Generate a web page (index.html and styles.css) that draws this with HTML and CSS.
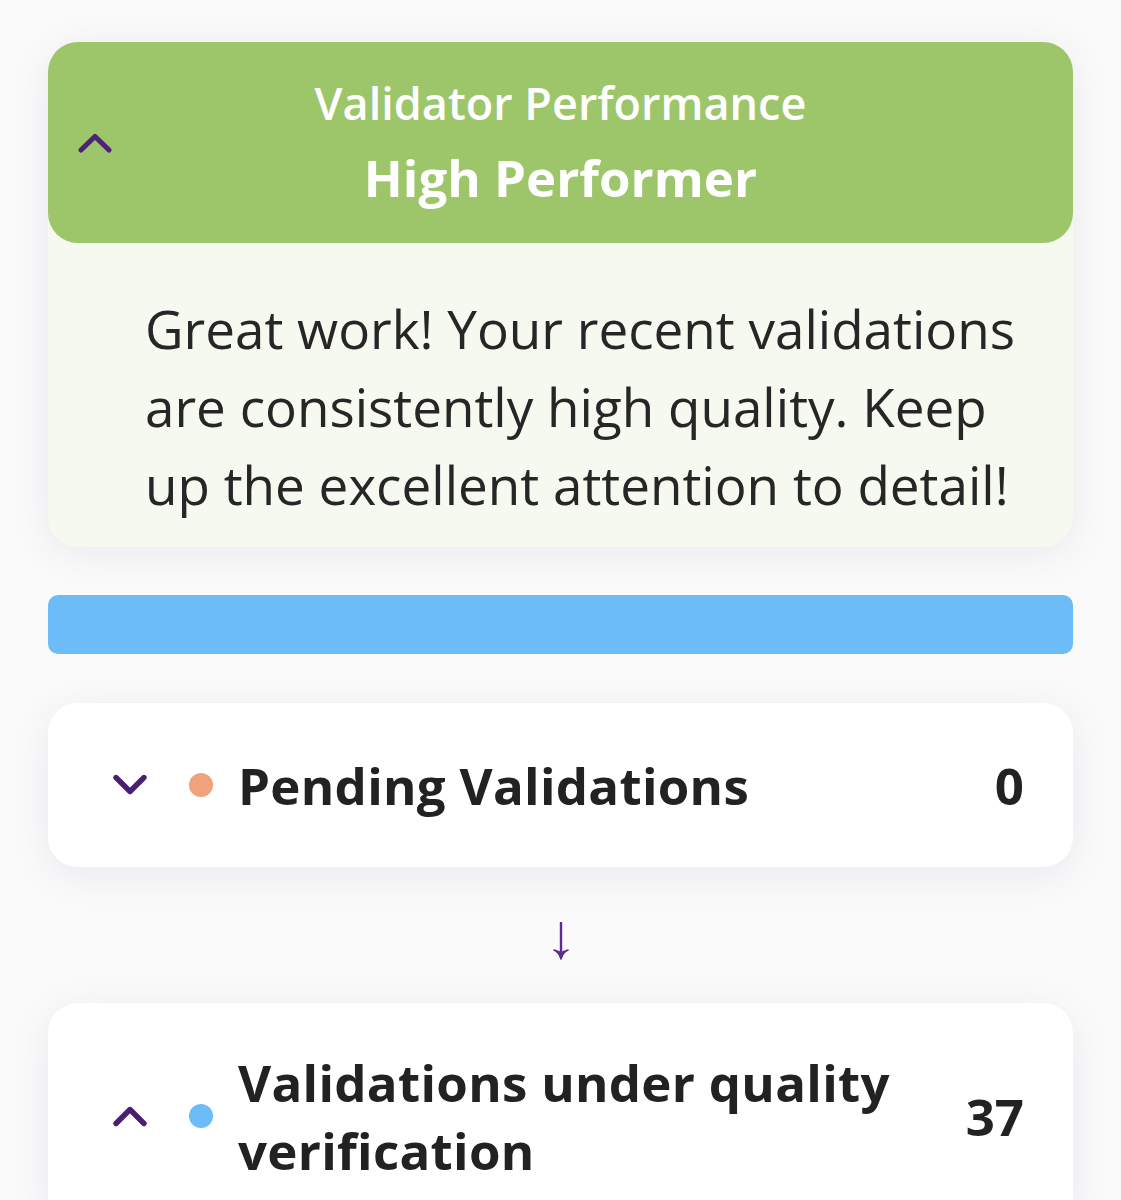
FILE: index.html
```html
<!DOCTYPE html>
<html lang="en">
<head>
<meta charset="utf-8">
<title>Validator</title>
<link rel="stylesheet" href="styles.css">
</head>
<body>
<main class="page">
  <section class="perf-card">
    <div class="perf-header">
      <div class="perf-toggle">
        <svg class="chev" viewBox="0 0 36 22" width="36" height="22"><path d="M4 18 L18 4.5 L32 18" fill="none" stroke="#4d2376" stroke-width="5.2" stroke-linecap="round" stroke-linejoin="round"/></svg>
      </div>
      <div class="perf-titles">
        <div class="perf-label">Validator Performance</div>
        <div class="perf-level">High Performer</div>
      </div>
      <div></div>
    </div>
    <p class="perf-body">Great work! Your recent validations are consistently high quality. Keep up the excellent attention to detail!</p>
  </section>

  <div class="blue-bar"></div>

  <section class="stat-card">
    <svg class="chev small" viewBox="0 0 36 24" width="36" height="24"><path d="M4 4.5 L18 18.5 L32 4.5" fill="none" stroke="#4a1f73" stroke-width="5.4" stroke-linecap="round" stroke-linejoin="round"/></svg>
    <span class="dot dot-orange"></span>
    <span class="stat-name">Pending Validations</span>
    <span class="stat-count">0</span>
  </section>

  <div class="flow-arrow" aria-label="then">
    <svg viewBox="0 0 20 40" width="20" height="40"><path d="M10 1 V34" stroke="#5b2d8e" stroke-width="2.4" fill="none"/><path d="M3 29 Q8 31 10 38 Q12 31 17 29 Q12 31 10 31.5 Q8 31 3 29 Z" fill="#5b2d8e" stroke="#5b2d8e" stroke-width="1.6" stroke-linejoin="round"/></svg>
  </div>

  <section class="stat-card tall">
    <svg class="chev small" viewBox="0 0 36 24" width="36" height="24"><path d="M4 19.5 L18 5.5 L32 19.5" fill="none" stroke="#4a1f73" stroke-width="5.4" stroke-linecap="round" stroke-linejoin="round"/></svg>
    <span class="dot dot-blue"></span>
    <span class="stat-name">Validations under quality verification</span>
    <span class="stat-count">37</span>
  </section>
</main>
</body>
</html>
```
FILE: styles.css
```css
* { box-sizing: border-box; }
html, body { margin: 0; padding: 0; }
body {
  background: #fafafb;
  font-family: "Open Sans", "Noto Sans", sans-serif;
  color: #222222;
}
.page {
  padding: 42px 48px 0 48px;
  display: flex;
  flex-direction: column;
}
.perf-card {
  background: #f6f9f0;
  border-radius: 30px;
  box-shadow: 0 6px 40px rgba(30,20,60,0.07);
}
.perf-header {
  background: #9dc66b;
  border-radius: 30px;
  height: 201px;
  display: grid;
  grid-template-columns: 1fr auto 1fr;
  align-items: center;
}
.perf-toggle { padding-left: 77px; padding-left: 29px; display: flex; align-items: center; }
.perf-titles {
  align-self: start;
  padding-top: 31px;
  text-align: center;
  color: #ffffff;
}
.perf-label { font-size: 45px; font-weight: 600; line-height: 60px; }
.perf-level { font-size: 51px; font-weight: 700; line-height: 88px; }
.perf-body {
  margin: 0;
  padding: 47px 36px 23px 97px;
  font-size: 53px;
  line-height: 78px;
  color: #262626;
}
.blue-bar {
  margin-top: 48px;
  height: 59px;
  background: #6bbcf7;
  border-radius: 10px;
}
.stat-card {
  margin-top: 49px;
  background: #ffffff;
  border-radius: 30px;
  height: 164px;
  box-shadow: 0 8px 40px rgba(30,20,60,0.07);
  display: flex;
  align-items: center;
  padding: 0 49px 0 64px;
}
.stat-card.tall { margin-top: 0; height: 226px; }
.chev.small { flex: none; }
.dot {
  flex: none;
  width: 24px;
  height: 24px;
  border-radius: 50%;
  margin-left: 41px;
  margin-right: 25px;
}
.dot-orange { background: #f0a27d; }
.dot-blue { background: #6bbcf7; }
.stat-name {
  flex: 1;
  font-size: 51px;
  font-weight: 700;
  line-height: 68px;
  letter-spacing: 0.3px;
  color: #222222;
  padding-right: 60px;
}
.stat-count {
  font-size: 51px;
  font-weight: 700;
  color: #222222;
}
.flow-arrow {
  height: 136px;
  display: flex;
  justify-content: center;
  align-items: flex-start;
  padding-top: 54px;
}
```
